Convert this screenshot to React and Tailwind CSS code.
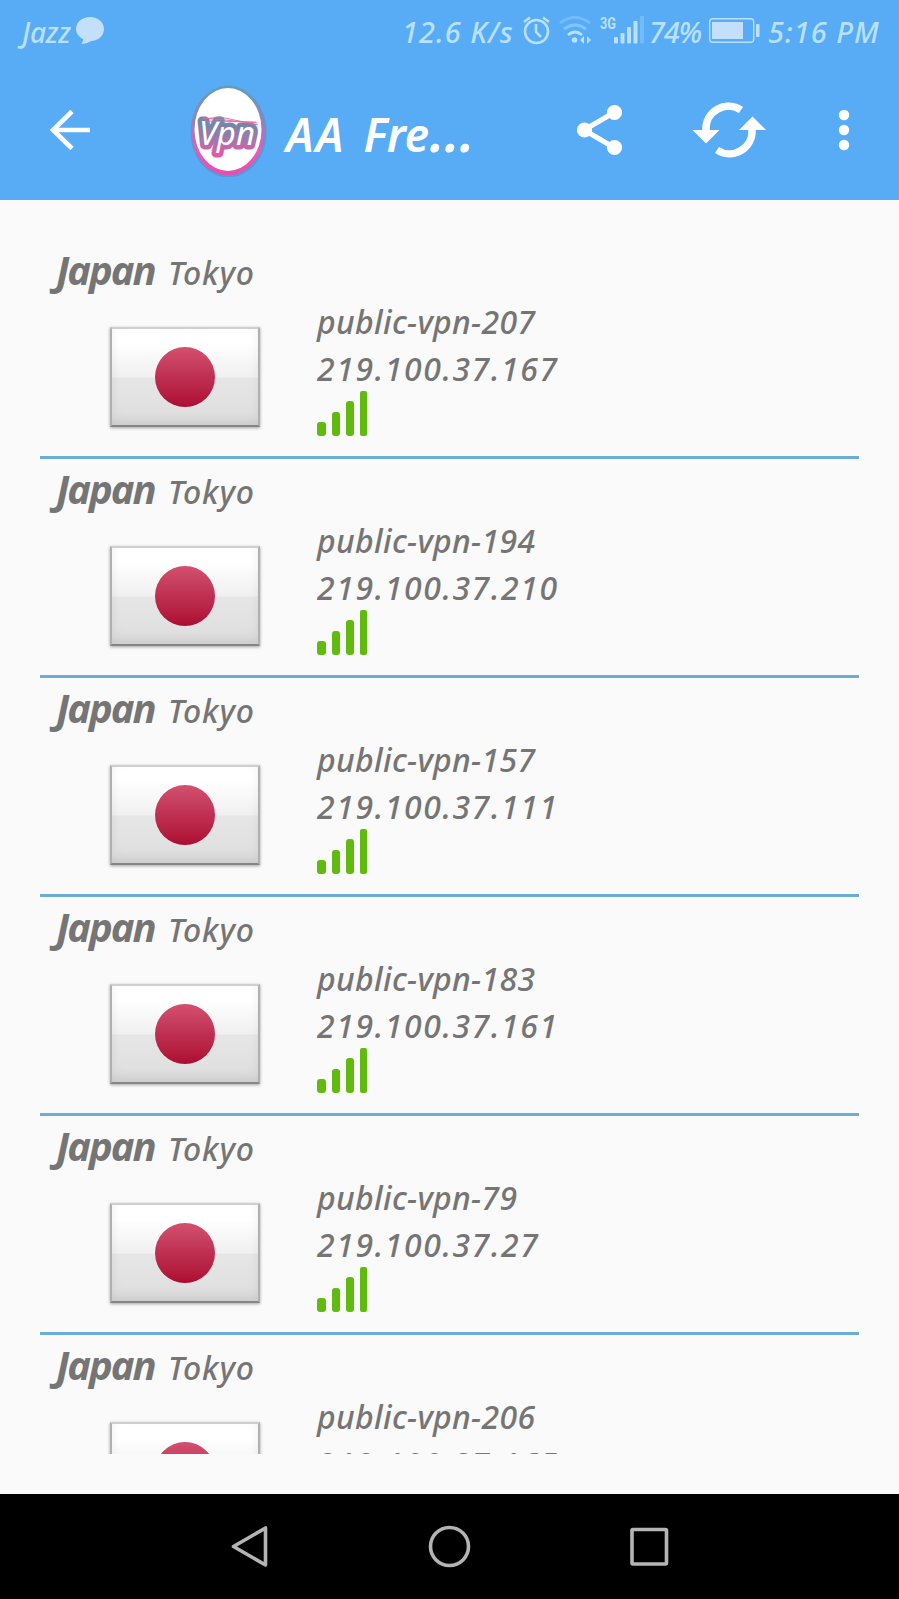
import React from 'react'

const servers = [
  { name: 'public-vpn-207', ip: '219.100.37.167' },
  { name: 'public-vpn-194', ip: '219.100.37.210' },
  { name: 'public-vpn-157', ip: '219.100.37.111' },
  { name: 'public-vpn-183', ip: '219.100.37.161' },
  { name: 'public-vpn-79', ip: '219.100.37.27' },
  { name: 'public-vpn-206', ip: '219.100.37.165' },
]

function StatusBar() {
  return (
    <div className="flex h-[60px] items-center text-[29px] font-medium text-[#b9e0fd] whitespace-nowrap">
      <div className="ml-[22px] w-[54px] pt-[3px] text-[28px] leading-[60px] -tracking-[0.2px]">Jazz</div>
      <svg className="h-[60px] w-[30px]" viewBox="76 0 30 60" fill="#c3dff9">
        <path d="M90 17c8 0 14 5 14 12s-6 12-13 12c-3 2-6 3-10 3 2-2 2-3 2-5-4-2-7-6-7-10 0-7 6-12 14-12z" />
      </svg>
      <div className="ml-[296px] w-[121px] pt-[3px] leading-[60px] tracking-[1px]">12.6 K/s</div>
      {/* alarm */}
      <svg className="h-[60px] w-[28px]" viewBox="523 0 28 60" fill="none" stroke="currentColor" strokeWidth="2.6">
        <circle cx="536.5" cy="31.5" r="11.5" />
        <path d="M536 24v8l5 5M524 22l6-4.500M549 22l-6-4.500" />
      </svg>
      {/* wifi */}
      <svg className="ml-[7px] h-[60px] w-[36px]" viewBox="558 0 36 60" fill="none" stroke="currentColor" strokeWidth="2.8">
        <path d="M560 23q15-11 30 0" opacity="0.3" />
        <path d="M564 29q11-8 22 0" opacity="0.45" />
        <path d="M568 35q7-6 14 0" />
        <circle cx="574.500" cy="40" r="2.800" fill="currentColor" stroke="none" />
        <path d="M584 36v8l-4-4zM587 36v8l4-4z" fill="currentColor" stroke="none" />
      </svg>
      <div className="ml-[6px] flex w-[49px]">
        <span className="w-[14px] origin-left scale-x-75 font-['Roboto',sans-serif] text-[17px] leading-[46px] font-bold not-italic">3G</span>
        <svg className="h-[60px] w-[32px]" viewBox="614 0 32 60" fill="currentColor">
          <rect x="614" y="37" width="4" height="6.500" rx="1" />
          <rect x="620.500" y="33" width="4" height="10.500" rx="1" />
          <rect x="627" y="27" width="4" height="16.500" rx="1" />
          <rect x="633.500" y="21" width="4" height="22.500" rx="1" />
          <rect x="640" y="16" width="4" height="27.500" rx="1" opacity="0.3" />
        </svg>
      </div>
      <div className="w-[59px] pt-[3px] leading-[60px] -tracking-[1.2px]">74%</div>
      <svg className="h-[60px] w-[52px]" viewBox="708 0 52 60" fill="#c3dff9">
        <rect x="709.700" y="18.700" width="44" height="23.600" rx="3" fill="none" stroke="#b9e0fd" strokeWidth="1.400" />
        <rect x="712" y="22" width="31" height="17" />
        <rect x="756" y="24" width="3.500" height="13" rx="1" />
      </svg>
      <div className="ml-[8px] pt-[3px] leading-[60px] tracking-[1px]">5:16 PM</div>
    </div>
  )
}

function AppLogo() {
  return (
    <svg className="h-[94px] w-[80px]" viewBox="188 83 80 94">
      <defs>
        <linearGradient id="ring" x1="0" y1="0" x2="0" y2="1">
          <stop offset="0" stopColor="#5f9fb8" />
          <stop offset="0.35" stopColor="#8a86bd" />
          <stop offset="0.75" stopColor="#e85ab4" />
          <stop offset="1" stopColor="#e24fae" />
        </linearGradient>
        <linearGradient id="word" gradientUnits="userSpaceOnUse" x1="0" y1="117" x2="0" y2="160">
          <stop offset="0.1" stopColor="#6f87a8" />
          <stop offset="0.5" stopColor="#9a7ab0" />
          <stop offset="1" stopColor="#fb4da6" />
        </linearGradient>
      </defs>
      <ellipse cx="228.500" cy="132" rx="38" ry="45.500" fill="#4a7ea8" opacity="0.35" />
      <ellipse cx="228" cy="130.500" rx="37" ry="45" fill="url(#ring)" />
      <ellipse cx="228" cy="129.500" rx="33.500" ry="41.500" fill="#fff" />
      <text
        x="199"
        y="145"
        textLength="56"
        lengthAdjust="spacingAndGlyphs"
        className="text-[33px] font-normal italic"
        fill="#fff"
        stroke="url(#word)"
        strokeWidth="9"
        strokeLinejoin="round"
        strokeLinecap="round"
        paintOrder="stroke"
      >
        Vpn
      </text>
      <path d="M203 119l17-2 38 8M203 118l54 5M206 121l50 1" stroke="#e7679f" strokeWidth="0.900" fill="none" />
    </svg>
  )
}

function AppBar() {
  return (
    <div className="flex h-[140px] items-center text-white">
      <svg className="ml-[50px] h-[42px] w-[42px]" viewBox="50 109 42 42" fill="none" stroke="currentColor" strokeWidth="4.600">
        <path d="M90 130H53M72 111.500L53 130l19 18.500" />
      </svg>
      <div className="ml-[96px]">
        <AppLogo />
      </div>
      <div className="ml-[18px] w-[291px] pt-[5px] text-[46px] leading-[60px] font-semibold whitespace-nowrap">
        <span className="tracking-[2px]">AA</span>
        <span className="ml-[18px] -tracking-[0.3px]">Fre</span>
        <span className="ml-[1px] text-[56px] leading-none">…</span>
      </div>
      <svg className="h-[52px] w-[46px]" viewBox="577 104 46 52" fill="currentColor">
        <path d="M614 112.500L584 130l30 17.500" fill="none" stroke="currentColor" strokeWidth="5" />
        <circle cx="614.500" cy="112.500" r="7.600" />
        <circle cx="584.500" cy="130" r="7.600" />
        <circle cx="614.500" cy="147.500" r="7.600" />
      </svg>
      <svg className="ml-[69px] h-[56px] w-[76px]" viewBox="692 102 76 56" fill="currentColor">
        <path d="M706 131v-1a22.500 22.500 0 0 1 35-20M752 129v1a22.500 22.500 0 0 1-35 20" fill="none" stroke="currentColor" strokeWidth="7.500" />
        <path d="M692.500 130h27L706 143.500zM739 130h27l-13.500-13.500z" />
      </svg>
      <svg className="ml-[69px] h-[42px] w-[14px]" viewBox="837 109 14 42" fill="currentColor">
        <circle cx="844" cy="115" r="5.200" />
        <circle cx="844" cy="130" r="5.200" />
        <circle cx="844" cy="145" r="5.200" />
      </svg>
    </div>
  )
}

function Flag() {
  return (
    <div className="flex h-[100px] w-[150px] items-center justify-center border-2 border-t-[#cfcfcf] border-r-[#b0b0b0] border-b-[#858585] border-l-[#b0b0b0] bg-[linear-gradient(to_bottom,#ffffff_15%,#f0f0f0_50%,#e6e6e6_51%,#dedede_100%)] shadow-[0_1px_3px_rgba(0,0,0,0.35),inset_0_-6px_14px_-4px_rgba(0,0,0,0.12)]">
      <div className="size-[60px] rounded-full bg-linear-to-b from-[#d2506e] via-[#bf2f52] to-[#ad0a31]" />
    </div>
  )
}

function SignalBars() {
  return (
    <div className="flex h-[45px] items-end">
      <div className="mr-[6px] h-[14px] w-[9px] rounded-[3px] bg-[#61bb0f]" />
      <div className="mr-[6px] h-[24px] w-[8px] rounded-[3px] bg-[#61bb0f]" />
      <div className="mr-[6px] h-[35px] w-[8px] rounded-[3px] bg-[#61bb0f]" />
      <div className="h-[45px] w-[7px] rounded-[2px] bg-[#61bb0f]" />
    </div>
  )
}

function ServerRow({ server }) {
  return (
    <div className="h-[219px] shrink-0 border-b-[3px] border-[#6aaed6] whitespace-nowrap text-[#757575]">
      <div className="flex h-[62px] items-baseline pl-[16px]">
        <div className="w-[112px] text-[40px] leading-[60px] font-bold -tracking-[2px]">Japan</div>
        <div className="text-[32px] font-medium tracking-[0.9px]">Tokyo</div>
      </div>
      <div className="flex">
        <div className="mt-[25px] ml-[70px]">
          <Flag />
        </div>
        <div className="-mt-[4px] ml-[57px] text-[32px] leading-[47px] font-medium">
          <div className="h-[47px] tracking-[0.3px]">{server.name}</div>
          <div className="h-[46px] tracking-[1.6px]">{server.ip}</div>
          <SignalBars />
        </div>
      </div>
    </div>
  )
}

export default function App() {
  return (
    <div className="flex h-[1599px] w-[899px] flex-col overflow-hidden bg-[#fafafa] font-['Noto_Sans','Open_Sans',sans-serif] italic">
      <header className="h-[200px] shrink-0 bg-[#57acf5]">
        <StatusBar />
        <AppBar />
      </header>

      <main className="mx-[40px] mt-[40px] flex h-[1214px] flex-col overflow-hidden">
        {servers.map((server) => (
          <ServerRow key={server.name} server={server} />
        ))}
      </main>

      <nav className="mt-[40px] flex h-[105px] items-center justify-center bg-black">
        <svg className="h-[105px] w-[440px]" viewBox="230 1494 440 105" fill="none" stroke="#b4b4b4" strokeWidth="3.600" strokeLinejoin="round">
          <path d="M265.500 1528v37l-32-18.500z" />
          <circle cx="449.500" cy="1546.500" r="19" />
          <rect x="632" y="1529.500" width="34.500" height="34.500" rx="1" />
        </svg>
      </nav>
    </div>
  )
}
